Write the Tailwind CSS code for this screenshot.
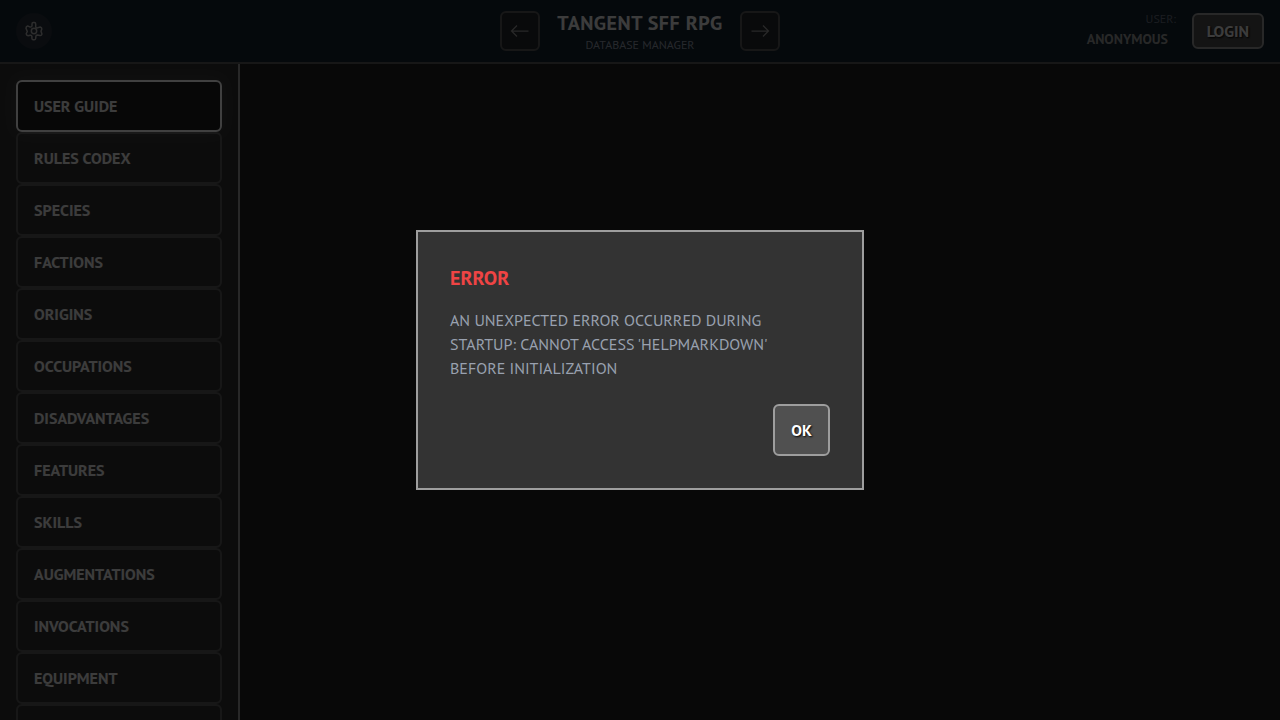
<!DOCTYPE html>
<html lang="en">
<head>
<meta charset="utf-8">
<meta name="viewport" content="width=device-width, initial-scale=1">
<title>Tangent SFF RPG Database Manager</title>
<script src="https://cdn.jsdelivr.net/npm/@tailwindcss/browser@4"></script>
</head>
<body class="flex h-screen flex-col overflow-hidden bg-[#202020] font-['PT_Sans','Fira_Sans','Noto_Sans_CJK_SC',sans-serif] text-base text-[#f0f0f0] uppercase">
  <header class="grid h-16 shrink-0 grid-cols-[1fr_auto_1fr] items-center border-b-2 border-[#5c5c5c] bg-[#142430] px-4">
    <button type="button" aria-label="Settings" class="flex size-9 items-center justify-center rounded-full bg-[#28303c] text-[#b4b4b4]">
      <svg class="size-5" viewBox="0 0 20 20" fill="none" stroke="currentColor" stroke-width="1.5" stroke-linejoin="round" aria-hidden="true">
        <path d="M8 3Q8 1.5 9.2 1.5H10.4Q11.7 1.5 11.7 3V5.9Q12 7.2 13.3 6.9L16.2 6Q17.9 6.4 17.8 8L17 10.2L17.9 13Q17.7 14.8 16 14.6L13.4 14Q11.9 14 11.9 15.3L11.7 17.5Q11.5 18.8 10.2 18.8H9Q7.9 18.7 7.9 17.3V15.2Q7.5 13.9 6.2 14.2L4 14.8Q2.2 14.5 2.2 12.8L3.3 10.5L2 7.2Q2 5.2 3.6 4.9L6.2 6.1Q7.8 6.2 8 5Z"/>
        <circle cx="10" cy="10" r="2.7"/>
      </svg>
    </button>
    <div class="flex items-center gap-4">
      <button type="button" aria-label="Back" class="flex size-10 items-center justify-center rounded-md border-2 border-[#5c5c5c] bg-[#25282c] text-[#9e9e9e]">
        <svg class="size-5" viewBox="0 0 20 20" fill="none" stroke="currentColor" stroke-width="1.25" aria-hidden="true"><path d="M18.5 10H1.5M7 4.5L1.5 10L7 15.5"/></svg>
      </button>
      <div class="min-w-42 text-center">
        <h1 class="text-xl leading-7 font-bold tracking-wide">Tangent SFF RPG</h1>
        <p class="text-xs leading-4 text-gray-400">Database Manager</p>
      </div>
      <button type="button" aria-label="Forward" class="flex size-10 items-center justify-center rounded-md border-2 border-[#5c5c5c] bg-[#25282c] text-[#9e9e9e]">
        <svg class="size-5" viewBox="0 0 20 20" fill="none" stroke="currentColor" stroke-width="1.25" aria-hidden="true"><path d="M1.5 10H18.5M13 4.5L18.5 10L13 15.5"/></svg>
      </button>
    </div>
    <div class="flex items-center justify-end gap-4">
      <div class="text-right">
        <p class="text-xs leading-4 text-gray-500">User:</p>
        <p class="pr-2 text-sm leading-6 font-bold text-[#9e9e9e]">Anonymous</p>
      </div>
      <button type="button" class="h-9 min-w-18 rounded-md border-2 border-[#9e9e9e] bg-[#505050] px-3 font-bold uppercase text-shadow-[1px_1px_2px_#000]">Login</button>
    </div>
  </header>
  <div class="flex min-h-0 flex-1">
    <nav class="w-60 shrink-0 overflow-hidden border-r-2 border-[#9e9e9e] bg-[#333] p-4 font-bold">
      <button type="button" class="relative block w-full rounded-md border-2 border-white bg-[#1e1e1e] px-4 py-3 text-left uppercase shadow-[0_0_15px_rgba(255,255,255,0.1)]">User Guide</button>
      <button type="button" class="block w-full rounded-md border-2 border-[#5c5c5c] px-4 py-3 text-left uppercase">Rules Codex</button>
      <button type="button" class="block w-full rounded-md border-2 border-[#5c5c5c] px-4 py-3 text-left uppercase">Species</button>
      <button type="button" class="block w-full rounded-md border-2 border-[#5c5c5c] px-4 py-3 text-left uppercase">Factions</button>
      <button type="button" class="block w-full rounded-md border-2 border-[#5c5c5c] px-4 py-3 text-left uppercase">Origins</button>
      <button type="button" class="block w-full rounded-md border-2 border-[#5c5c5c] px-4 py-3 text-left uppercase">Occupations</button>
      <button type="button" class="block w-full rounded-md border-2 border-[#5c5c5c] px-4 py-3 text-left uppercase">Disadvantages</button>
      <button type="button" class="block w-full rounded-md border-2 border-[#5c5c5c] px-4 py-3 text-left uppercase">Features</button>
      <button type="button" class="block w-full rounded-md border-2 border-[#5c5c5c] px-4 py-3 text-left uppercase">Skills</button>
      <button type="button" class="block w-full rounded-md border-2 border-[#5c5c5c] px-4 py-3 text-left uppercase">Augmentations</button>
      <button type="button" class="block w-full rounded-md border-2 border-[#5c5c5c] px-4 py-3 text-left uppercase">Invocations</button>
      <button type="button" class="block w-full rounded-md border-2 border-[#5c5c5c] px-4 py-3 text-left uppercase">Equipment</button>
      <button type="button" aria-label="More" class="block h-13 w-full rounded-md border-2 border-[#5c5c5c]"></button>
    </nav>
    <main class="flex-1"></main>
  </div>
  <div class="fixed inset-0 z-10 flex items-center justify-center bg-black/75">
    <div role="alertdialog" aria-modal="true" aria-labelledby="error-title" aria-describedby="error-text" class="w-full max-w-md border-2 border-[#9e9e9e] bg-[#333] p-8">
      <h2 id="error-title" class="mb-4 text-xl leading-7 font-bold text-[#ef4444]">Error</h2>
      <p id="error-text" class="pr-8 text-gray-400">An unexpected error occurred during startup: Cannot access 'helpMarkdown' before initialization</p>
      <div class="mt-6 flex justify-end">
        <button type="button" class="rounded-md border-2 border-[#9e9e9e] bg-[#505050] px-4 py-3 font-bold text-white uppercase text-shadow-[1px_1px_2px_#000]">OK</button>
      </div>
    </div>
  </div>
</body>
</html>
